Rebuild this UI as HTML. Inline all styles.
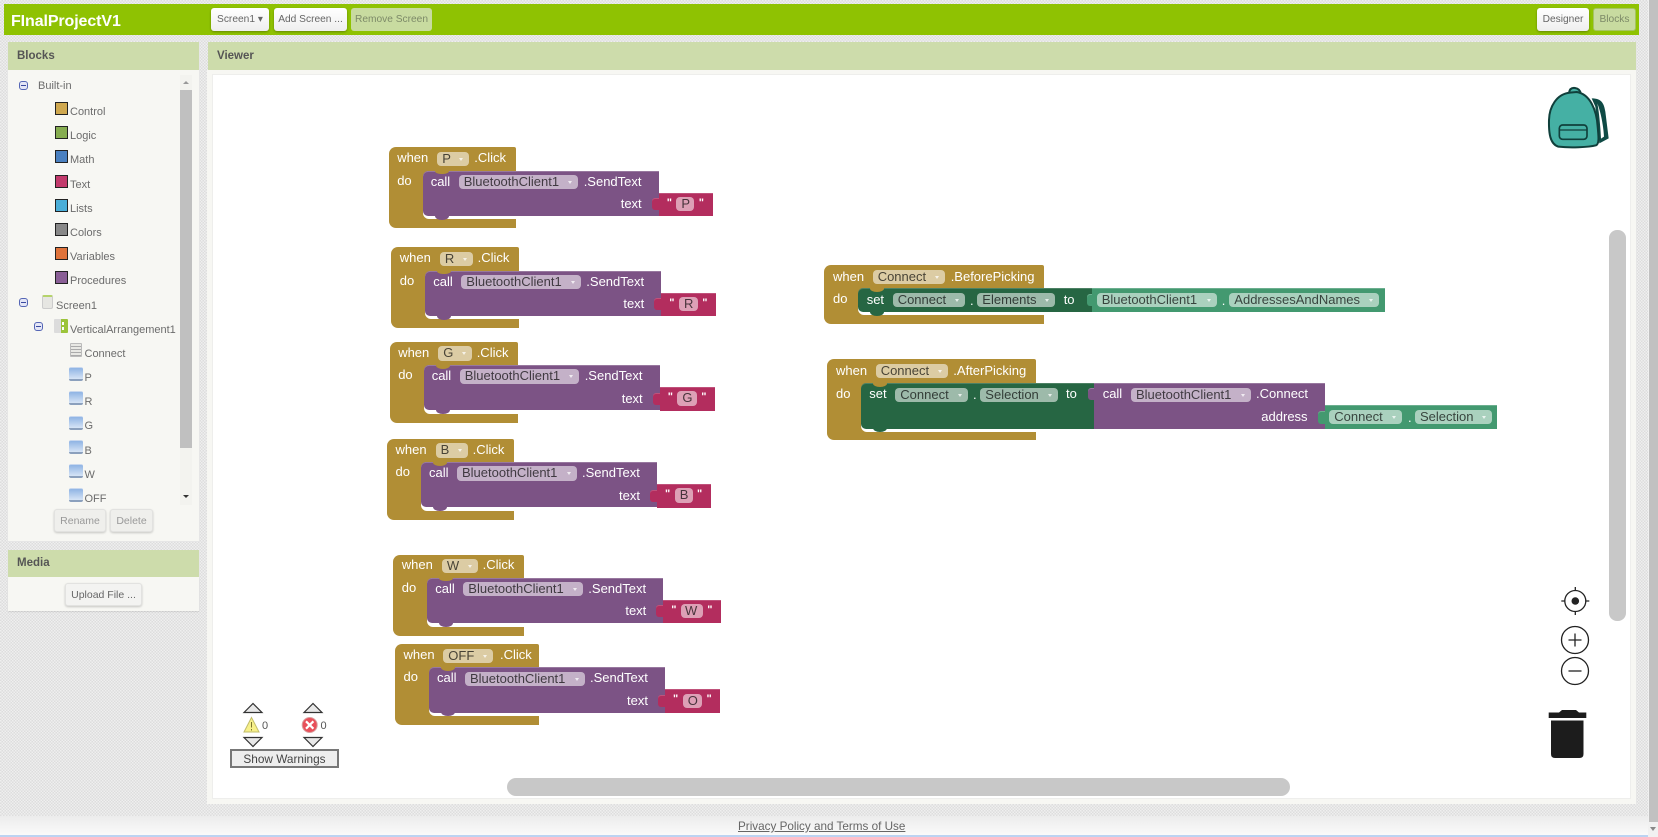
<!DOCTYPE html>
<html lang="en">
<head>
<meta charset="utf-8">
<title>FinalProjectV1</title>
<style>
html,body{margin:0;padding:0;width:1658px;height:837px;overflow:hidden}
body{position:relative;font-family:"Liberation Sans",Arial,sans-serif;background:#e6e6e6 repeating-conic-gradient(#dddddd 0 25%,#efefef 0 50%) 0 0/3px 3px;filter:blur(.3px)}
div,span,a,b{position:absolute;box-sizing:border-box}
.bar{left:4px;top:4px;width:1635px;height:31px;background:#8fc202}
.title{left:11px;top:11.5px;font:bold 16px/20px "Liberation Sans",sans-serif;color:#fff;white-space:nowrap;letter-spacing:-.1px}
.btn{height:23px;top:8px;border-radius:3px;background:linear-gradient(#fff,#eee);box-shadow:0 1px 2px rgba(0,0,0,.3);font-size:10.2px;line-height:23px;text-align:center;color:#666;white-space:nowrap}
.btn.dis{background:#c8dba0;color:#7d8a68;box-shadow:none}
.ph{background:#cddcab;color:#555;font-weight:bold;font-size:11.5px;line-height:29px;padding-left:9px}
.pb{background:#f7f7f3}
.tr{font-size:11px;line-height:16px;color:#6c6c6c;white-space:nowrap}
.sq{width:13px;height:13px;border:1px solid #222;left:55px}
.col{width:9px;height:9px;border:1px solid #5566b5;border-radius:3px;background:#e4e6f6}
.col:after{content:"";position:absolute;left:1px;right:1px;top:3px;height:1px;background:#3a4aa0}
.ic{left:69px;width:14px;height:14px;border-radius:2px;background:linear-gradient(#8fb4e4,#d6e4f6);border-bottom:2px solid #8ba0bd;border-top:1px solid #c9d8ee}
.gb{height:23px;border-radius:3px;background:#efefec;box-shadow:0 1px 2px rgba(0,0,0,.2);font-size:10.5px;line-height:22px;text-align:center;color:#999;border:1px solid #e2e2e0}

/* blocks */
.ev{height:81px;background:#b18e35;border-radius:7px 2px 0 7px}
.wh{left:34px;top:23.5px;height:48.5px;background:#fff;border-radius:6px 0 0 6px}
.t{line-height:16px;font-size:13px;color:#fff;white-space:nowrap}
.f{height:14.4px;border-radius:4px;background:rgba(255,255,255,.55);color:rgba(0,0,0,.68);font-size:13px;line-height:14.4px;padding-left:5px;white-space:nowrap}
.f.n:after{content:"";position:absolute;right:6px;top:6px;border-left:2.5px solid transparent;border-right:2.5px solid transparent;border-top:3px solid rgba(255,255,255,.75)}
.pu{background:#7c5385;box-shadow:inset 0 1px 0 rgba(255,255,255,.22)}
.dg{background:#266643;box-shadow:inset 0 1px 0 rgba(255,255,255,.18)}
.lg{background:#439970;box-shadow:inset 0 1px 0 rgba(255,255,255,.22)}
.mg{background:#b32d5e;box-shadow:inset 0 1px 0 rgba(255,255,255,.18)}
.tab{width:7px;height:12px;border-radius:3px 0 0 3px}
.nt{width:14px;height:3.5px;border-radius:0 0 50% 50%/0 0 100% 100%;top:0}
.bm{width:14px;height:4px;border-radius:0 0 50% 50%/0 0 100% 100%;box-shadow:none!important}
.q{font-size:11px;line-height:12px;color:#fff;font-weight:bold}
.foot{left:0;top:816px;width:1648px;height:19px;background:linear-gradient(#ececec,#fafafa)}
.line{left:0;top:835px;width:1648px;height:2px;background:#bcd3f2}
</style>
</head>
<body>

<!-- top bar -->
<div class="bar"></div>
<div class="title">FInalProjectV1</div>
<div class="btn" style="left:211px;width:58px">Screen1 ▾</div>
<div class="btn" style="left:274px;width:73px">Add Screen ...</div>
<div class="btn dis" style="left:351px;width:81px">Remove Screen</div>
<div class="btn" style="left:1537px;width:52px">Designer</div>
<div class="btn dis" style="left:1593px;width:43px;border:1px solid #a5c463;line-height:21px">Blocks</div>

<!-- left panel -->
<div class="ph" style="left:8px;top:42px;width:191px;height:28px">Blocks</div>
<div class="pb" style="left:8px;top:70px;width:191px;height:471px"></div>
<div style="left:180px;top:75px;width:12px;height:430px;background:#f3f3ef"></div>
<div style="left:180px;top:90px;width:12px;height:358px;background:#c0c0c0"></div>
<div style="left:183px;top:81px;border-left:3px solid transparent;border-right:3px solid transparent;border-bottom:3px solid #999"></div>
<div style="left:183px;top:495px;border-left:3px solid transparent;border-right:3px solid transparent;border-top:3px solid #333"></div>

<div class="col" style="left:19px;top:81px"></div>
<div class="tr" style="left:38px;top:78px">Built-in</div>
<div class="sq" style="top:102px;background:#cfa84f"></div><div class="tr" style="left:70px;top:104px">Control</div>
<div class="sq" style="top:126px;background:#86ad50"></div><div class="tr" style="left:70px;top:128px">Logic</div>
<div class="sq" style="top:150px;background:#4a80c0"></div><div class="tr" style="left:70px;top:152px">Math</div>
<div class="sq" style="top:175px;background:#c23a6c"></div><div class="tr" style="left:70px;top:177px">Text</div>
<div class="sq" style="top:199px;background:#4aaed8"></div><div class="tr" style="left:70px;top:201px">Lists</div>
<div class="sq" style="top:223px;background:#888"></div><div class="tr" style="left:70px;top:225px">Colors</div>
<div class="sq" style="top:247px;background:#df733b"></div><div class="tr" style="left:70px;top:249px">Variables</div>
<div class="sq" style="top:271px;background:#8a5f96"></div><div class="tr" style="left:70px;top:273px">Procedures</div>

<div class="col" style="left:19px;top:298px"></div>
<div style="left:42px;top:295px;width:11px;height:14px;border:1px solid #ccc;border-top:2px solid #b5d36a;border-radius:2px;background:#e6e6e2"></div>
<div class="tr" style="left:56px;top:298px">Screen1</div>
<div class="col" style="left:34px;top:322px"></div>
<div style="left:54px;top:319px;width:14px;height:14px;border-radius:1px;background:linear-gradient(90deg,#dcdcdc 50%,#9cc43a 50%)"></div>
<div style="left:62px;top:322px;width:2px;height:3px;background:#fff"></div><div style="left:62px;top:327px;width:2px;height:3px;background:#fff"></div>
<div class="tr" style="left:70px;top:322px">VerticalArrangement1</div>

<div style="left:70px;top:343px;width:12px;height:14px;border:1px solid #bbb;border-radius:1px;background:repeating-linear-gradient(#e8e8e4 0 2px,#aaa 2px 3px)"></div>
<div class="tr" style="left:84.5px;top:346px">Connect</div>
<div class="ic" style="top:367px"></div><div class="tr" style="left:84.5px;top:370px">P</div>
<div class="ic" style="top:391px"></div><div class="tr" style="left:84.5px;top:394px">R</div>
<div class="ic" style="top:416px"></div><div class="tr" style="left:84.5px;top:418px">G</div>
<div class="ic" style="top:440px"></div><div class="tr" style="left:84.5px;top:443px">B</div>
<div class="ic" style="top:464px"></div><div class="tr" style="left:84.5px;top:467px">W</div>
<div class="ic" style="top:488px"></div><div class="tr" style="left:84.5px;top:491px">OFF</div>

<div class="gb" style="left:54px;top:509px;width:52px">Rename</div>
<div class="gb" style="left:110px;top:509px;width:43px">Delete</div>

<div class="ph" style="left:8px;top:550px;width:191px;height:27px;line-height:27px">Media</div>
<div class="pb" style="left:8px;top:577px;width:191px;height:34px;box-shadow:0 1px 1px rgba(0,0,0,.1)"></div>
<div class="gb" style="left:65px;top:583px;width:77px;color:#666;background:#f3f3f1">Upload File ...</div>

<!-- viewer -->
<div class="ph" style="left:208px;top:42px;width:1428px;height:28px">Viewer</div>
<div class="pb" style="left:207px;top:70px;width:1429px;height:734px"></div>
<div style="left:213px;top:75px;width:1417px;height:723px;background:#fff;box-shadow:0 0 0 1px #eeeeec"></div>

<!-- P -->
<div style="left:388.7px;top:147.3px">
 <div class="ev" style="left:0;top:0;width:127.3px"></div><div class="wh" style="width:93.3px"></div>
 <div class="t" style="left:8.5px;top:3px">when</div><div class="f n" style="left:48.6px;top:4.5px;width:32px">P</div><div class="t" style="left:85.6px;top:3px">.Click</div>
 <div class="t" style="left:8.5px;top:25.4px">do</div>
 <div style="left:34px;top:23.4px">
  <div class="pu" style="left:0;top:0;width:236px;height:45.3px;border-radius:5px 0 0 5px"></div>
  <div class="nt" style="left:12px;background:#b18e35"></div><div class="bm pu" style="left:12px;top:45px"></div>
  <div class="t" style="left:8px;top:3px">call</div><div class="f n" style="left:36px;top:4.4px;width:119.7px">BluetoothClient1</div><div class="t" style="left:161px;top:3px">.SendText</div>
  <div class="t" style="right:-219px;top:25.5px">text</div>
  <div class="tab mg" style="left:229px;top:27.5px"></div>
  <div class="mg" style="left:236px;top:22px;width:54px;height:23.5px"></div>
  <div class="q" style="left:244px;top:26px">"</div><div class="f" style="left:253.7px;top:26.4px;width:18px">P</div><div class="q" style="left:276px;top:26px">"</div>
 </div>
</div>

<!-- R -->
<div style="left:391.3px;top:247.3px">
 <div class="ev" style="left:0;top:0;width:128px"></div><div class="wh" style="width:94px"></div>
 <div class="t" style="left:8.5px;top:3px">when</div><div class="f n" style="left:48.6px;top:4.5px;width:32.7px">R</div><div class="t" style="left:86.3px;top:3px">.Click</div>
 <div class="t" style="left:8.5px;top:25.4px">do</div>
 <div style="left:34px;top:23.4px">
  <div class="pu" style="left:0;top:0;width:236px;height:45.3px;border-radius:5px 0 0 5px"></div>
  <div class="nt" style="left:12px;background:#b18e35"></div><div class="bm pu" style="left:12px;top:45px"></div>
  <div class="t" style="left:8px;top:3px">call</div><div class="f n" style="left:36px;top:4.4px;width:119.7px">BluetoothClient1</div><div class="t" style="left:161px;top:3px">.SendText</div>
  <div class="t" style="right:-219px;top:25.5px">text</div>
  <div class="tab mg" style="left:229px;top:27.5px"></div>
  <div class="mg" style="left:236px;top:22px;width:55px;height:23.5px"></div>
  <div class="q" style="left:244px;top:26px">"</div><div class="f" style="left:253.7px;top:26.4px;width:19px">R</div><div class="q" style="left:277px;top:26px">"</div>
 </div>
</div>

<!-- G -->
<div style="left:389.7px;top:341.7px">
 <div class="ev" style="left:0;top:0;width:128.7px"></div><div class="wh" style="width:94.7px"></div>
 <div class="t" style="left:8.5px;top:3px">when</div><div class="f n" style="left:48.6px;top:4.5px;width:33.4px">G</div><div class="t" style="left:87px;top:3px">.Click</div>
 <div class="t" style="left:8.5px;top:25.4px">do</div>
 <div style="left:34px;top:23.4px">
  <div class="pu" style="left:0;top:0;width:236px;height:45.3px;border-radius:5px 0 0 5px"></div>
  <div class="nt" style="left:12px;background:#b18e35"></div><div class="bm pu" style="left:12px;top:45px"></div>
  <div class="t" style="left:8px;top:3px">call</div><div class="f n" style="left:36px;top:4.4px;width:119.7px">BluetoothClient1</div><div class="t" style="left:161px;top:3px">.SendText</div>
  <div class="t" style="right:-219px;top:25.5px">text</div>
  <div class="tab mg" style="left:229px;top:27.5px"></div>
  <div class="mg" style="left:236px;top:22px;width:55.5px;height:23.5px"></div>
  <div class="q" style="left:244px;top:26px">"</div><div class="f" style="left:253.7px;top:26.4px;width:19.5px">G</div><div class="q" style="left:277.5px;top:26px">"</div>
 </div>
</div>

<!-- B -->
<div style="left:387px;top:438.7px">
 <div class="ev" style="left:0;top:0;width:127.3px"></div><div class="wh" style="width:93.3px"></div>
 <div class="t" style="left:8.5px;top:3px">when</div><div class="f n" style="left:48.6px;top:4.5px;width:32px">B</div><div class="t" style="left:85.6px;top:3px">.Click</div>
 <div class="t" style="left:8.5px;top:25.4px">do</div>
 <div style="left:34px;top:23.4px">
  <div class="pu" style="left:0;top:0;width:236px;height:45.3px;border-radius:5px 0 0 5px"></div>
  <div class="nt" style="left:12px;background:#b18e35"></div><div class="bm pu" style="left:12px;top:45px"></div>
  <div class="t" style="left:8px;top:3px">call</div><div class="f n" style="left:36px;top:4.4px;width:119.7px">BluetoothClient1</div><div class="t" style="left:161px;top:3px">.SendText</div>
  <div class="t" style="right:-219px;top:25.5px">text</div>
  <div class="tab mg" style="left:229px;top:27.5px"></div>
  <div class="mg" style="left:236px;top:22px;width:54px;height:23.5px"></div>
  <div class="q" style="left:244px;top:26px">"</div><div class="f" style="left:253.7px;top:26.4px;width:18px">B</div><div class="q" style="left:276px;top:26px">"</div>
 </div>
</div>

<!-- W -->
<div style="left:393.3px;top:554.7px">
 <div class="ev" style="left:0;top:0;width:131px"></div><div class="wh" style="width:97px"></div>
 <div class="t" style="left:8.5px;top:2.5px">when</div><div class="f n" style="left:48.6px;top:4px;width:35.7px">W</div><div class="t" style="left:89.3px;top:2.5px">.Click</div>
 <div class="t" style="left:8.5px;top:24.9px">do</div>
 <div style="left:34px;top:22.9px">
  <div class="pu" style="left:0;top:0;width:236px;height:45.3px;border-radius:5px 0 0 5px"></div>
  <div class="nt" style="left:12px;background:#b18e35"></div><div class="bm pu" style="left:12px;top:45px"></div>
  <div class="t" style="left:8px;top:3px">call</div><div class="f n" style="left:36px;top:4.4px;width:119.7px">BluetoothClient1</div><div class="t" style="left:161px;top:3px">.SendText</div>
  <div class="t" style="right:-219px;top:25.5px">text</div>
  <div class="tab mg" style="left:229px;top:27.5px"></div>
  <div class="mg" style="left:236px;top:22px;width:58px;height:23.5px"></div>
  <div class="q" style="left:244px;top:26px">"</div><div class="f" style="left:253.7px;top:26.4px;width:22px;padding-left:4px">W</div><div class="q" style="left:280px;top:26px">"</div>
 </div>
</div>

<!-- OFF -->
<div style="left:395px;top:644px">
 <div class="ev" style="left:0;top:0;width:144.3px"></div><div class="wh" style="width:110.3px"></div>
 <div class="t" style="left:8.5px;top:3px">when</div><div class="f n" style="left:48.3px;top:4.5px;width:50px">OFF</div><div class="t" style="left:105px;top:3px">.Click</div>
 <div class="t" style="left:8.5px;top:25.4px">do</div>
 <div style="left:34px;top:23.4px">
  <div class="pu" style="left:0;top:0;width:236.3px;height:45.3px;border-radius:5px 0 0 5px"></div>
  <div class="nt" style="left:12px;background:#b18e35"></div><div class="bm pu" style="left:12px;top:45px"></div>
  <div class="t" style="left:8px;top:3px">call</div><div class="f n" style="left:36px;top:4.4px;width:119.7px">BluetoothClient1</div><div class="t" style="left:161px;top:3px">.SendText</div>
  <div class="t" style="right:-219px;top:25.5px">text</div>
  <div class="tab mg" style="left:229px;top:27.5px"></div>
  <div class="mg" style="left:236px;top:22px;width:55.4px;height:23.5px"></div>
  <div class="q" style="left:244px;top:26px">"</div><div class="f" style="left:253.7px;top:26.4px;width:19.5px">O</div><div class="q" style="left:277.5px;top:26px">"</div>
 </div>
</div>

<!-- BeforePicking -->
<div class="ev" style="left:824px;top:265px;width:220.3px;height:59px"></div>
<div style="left:858.3px;top:288.5px;width:186px;height:26.5px;background:#fff;border-radius:6px 0 0 6px"></div>
<div class="t" style="left:833px;top:268.7px">when</div><div class="f n" style="left:872.7px;top:269.8px;width:72.6px">Connect</div><div class="t" style="left:950.7px;top:268.7px">.BeforePicking</div>
<div class="t" style="left:833px;top:291.3px">do</div>
<div class="dg" style="left:858.3px;top:288.3px;width:233.4px;height:23.7px;border-radius:5px 0 0 5px"></div>
<div class="nt" style="left:870px;top:288.3px;background:#b18e35"></div><div class="bm dg" style="left:870px;top:311.5px"></div>
<div class="t" style="left:866.7px;top:292px">set</div>
<div class="f n" style="left:892.7px;top:293.1px;width:72.3px">Connect</div><div class="t" style="left:970px;top:293px">.</div>
<div class="f n" style="left:977.3px;top:293.1px;width:78px">Elements</div><div class="t" style="left:1063.7px;top:292px">to</div>
<div class="tab lg" style="left:1086.5px;top:293.5px;width:6px"></div>
<div class="lg" style="left:1091.7px;top:288.3px;width:293.3px;height:24px"></div>
<div class="f n" style="left:1096.7px;top:293.1px;width:120px">BluetoothClient1</div><div class="t" style="left:1221.7px;top:293px">.</div>
<div class="f n" style="left:1229.3px;top:293.1px;width:150px">AddressesAndNames</div>

<!-- AfterPicking -->
<div class="ev" style="left:827px;top:359.3px;width:209px;height:81px"></div>
<div style="left:860.7px;top:383.5px;width:175.3px;height:48.2px;background:#fff;border-radius:6px 0 0 6px"></div>
<div class="t" style="left:836px;top:362.7px">when</div><div class="f n" style="left:875.7px;top:363.8px;width:72.3px">Connect</div><div class="t" style="left:953.3px;top:362.7px">.AfterPicking</div>
<div class="t" style="left:836px;top:385.7px">do</div>
<div class="dg" style="left:860.7px;top:383.3px;width:233px;height:45.4px;border-radius:5px 0 0 5px"></div>
<div class="nt" style="left:873px;top:383.3px;background:#b18e35"></div><div class="bm dg" style="left:873px;top:428px"></div>
<div class="t" style="left:869.3px;top:386px">set</div>
<div class="f n" style="left:895.3px;top:387.5px;width:72.4px">Connect</div><div class="t" style="left:973px;top:387px">.</div>
<div class="f n" style="left:980.3px;top:387.5px;width:77.7px">Selection</div><div class="t" style="left:1066px;top:386px">to</div>
<div class="pu" style="left:1093.7px;top:383px;width:231.3px;height:45.5px"></div>
<div class="tab pu" style="left:1087.5px;top:388px;width:6.5px"></div>
<div class="t" style="left:1102.7px;top:386px">call</div>
<div class="f n" style="left:1131px;top:387.5px;width:120px">BluetoothClient1</div><div class="t" style="left:1256px;top:386px">.Connect</div>
<div class="t" style="left:1261.3px;top:408.7px">address</div>
<div class="tab lg" style="left:1318px;top:411px;height:13px"></div>
<div class="lg" style="left:1325px;top:405px;width:172.3px;height:23.5px"></div>
<div class="f n" style="left:1329.3px;top:409.8px;width:72.7px">Connect</div><div class="t" style="left:1408px;top:410px">.</div>
<div class="f n" style="left:1415px;top:409.8px;width:77px">Selection</div>

<!-- backpack -->
<svg style="position:absolute;left:1520px;top:70px" width="138" height="110" viewBox="0 0 414 330">
 <path d="M215 85C245 85 252 100 256 125L266 205L238 220L226 110Z" fill="#0f4a45"/>
 <path d="M232 100C242 125 250 165 252 200L243 206C241 170 238 130 232 100Z" fill="#fff"/>
 <path d="M147 68Q150 52 165 54Q180 56 183 72" fill="#45b0a4" stroke="#103f3b" stroke-width="6"/>
 <path d="M150 68C110 72 88 110 87 150C86 190 90 222 115 230C150 234 205 232 228 226C238 222 236 200 233 170C230 120 210 72 170 66Z" fill="#45b0a4" stroke="#103f3b" stroke-width="6"/>
 <rect x="118" y="165" width="83" height="43" rx="10" fill="#45b0a4" stroke="#103f3b" stroke-width="5"/>
 <path d="M118 180H201" stroke="#103f3b" stroke-width="4"/>
</svg>

<!-- zoom & trash -->
<svg style="position:absolute;left:1540px;top:580px" width="70" height="185" viewBox="0 0 70 185">
 <g fill="none" stroke="#222" stroke-width="1.3">
  <circle cx="35.3" cy="21" r="10.5"/>
  <path d="M35.3 7V11M35.3 31V35M21.3 21H25.3M45.3 21H49.3"/>
  <circle cx="35" cy="60" r="13.5"/>
  <path d="M28.5 60H41.5M35 53.5V66.5"/>
  <circle cx="35" cy="91" r="13.5"/>
  <path d="M28.5 91H41.5"/>
 </g>
 <circle cx="35.3" cy="21" r="3.8" fill="#222"/>
 <path d="M8.7 138V132.5H19L22 130H36L39 132.5H46.3V138Z" fill="#1c1c1c"/>
 <path d="M11 140.5H43.5V174Q43.5 178 39.5 178H15Q11 178 11 174Z" fill="#1c1c1c"/>
</svg>

<!-- warnings -->
<svg style="position:absolute;left:230px;top:700px" width="110" height="50" viewBox="0 0 110 50">
 <g fill="none" stroke="#333" stroke-width="1.2">
  <path d="M14 12.5L23 3.5L32 12.5H14Z" fill="#e8e8e8"/>
  <path d="M14 37.5H32L23 46.5Z" fill="#e8e8e8"/>
  <path d="M74 12.5L83 3.5L92 12.5H74Z" fill="#e8e8e8"/>
  <path d="M74 37.5H92L83 46.5Z" fill="#e8e8e8"/>
 </g>
 <path d="M21.5 17.5L29 32H14Z" fill="#f7f08a" stroke="#c2bd6a" stroke-width="1"/>
 <path d="M21.5 22V27.5M21.5 29V30.5" stroke="#7b7630" stroke-width="1"/>
 <circle cx="79.7" cy="25" r="7.5" fill="#e8505a" stroke="#d9a0a0"/>
 <path d="M76 21.3L83.4 28.7M83.4 21.3L76 28.7" stroke="#fff" stroke-width="2.2"/>
</svg>
<div style="left:262px;top:719px;font-size:11px;line-height:14px;color:#555">0</div>
<div style="left:320.5px;top:719px;font-size:11px;line-height:14px;color:#555">0</div>
<div style="left:230px;top:748.5px;width:109px;height:19.5px;border:2px solid #777;background:#eee;font-size:11.8px;line-height:16px;text-align:center;color:#444;white-space:nowrap">Show Warnings</div>

<!-- viewer scrollbars -->
<div style="left:1609px;top:230px;width:17px;height:391px;border-radius:8px;background:#c8c8c8"></div>
<div style="left:507px;top:778px;width:783px;height:18px;border-radius:9px;background:#c8c8c8"></div>

<!-- footer -->
<div class="foot"></div>
<div class="line"></div>
<a style="left:738px;top:820px;font-size:11.7px;line-height:14px;color:#666;text-decoration:underline;white-space:nowrap">Privacy Policy and Terms of Use</a>

<!-- page scrollbar -->
<div style="left:1648px;top:0;width:10px;height:837px;background:#f1f1f1"></div>
<div style="left:1649px;top:0;width:9px;height:822px;background:#c1c1c1"></div>
<div style="left:1650px;top:827px;border-left:3.5px solid transparent;border-right:3.5px solid transparent;border-top:4px solid #888"></div>

</body>
</html>
